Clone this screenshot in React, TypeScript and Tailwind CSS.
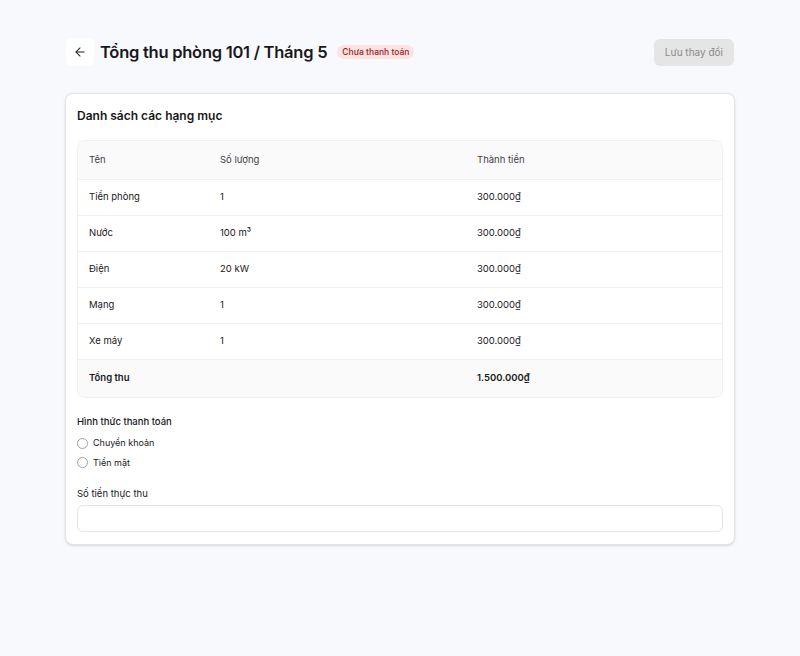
import { ArrowLeft } from "lucide-react";

const rows = [
  { name: "Tiền phòng", qty: "1", amount: "300.000₫" },
  { name: "Nước", qty: "100 m³", amount: "300.000₫" },
  { name: "Điện", qty: "20 kW", amount: "300.000₫" },
  { name: "Mạng", qty: "1", amount: "300.000₫" },
  { name: "Xe máy", qty: "1", amount: "300.000₫" },
];

export default function App() {
  return (
    <main
      className="min-h-screen bg-[#f8f9fc] px-[65px] pt-[38px] text-[#18181b]"
      style={{ fontFamily: "Inter, 'Noto Sans', sans-serif" }}
    >
      <header className="flex h-[28px] items-center justify-between">
        <div className="flex items-center">
          <button className="ml-[1px] flex h-[28px] w-[28px] items-center justify-center rounded-md bg-white">
            <ArrowLeft size={14} strokeWidth={1.75} />
          </button>
          <h1 className="ml-[6px] text-[16.5px] font-semibold tracking-[-0.25px]">Tổng thu phòng 101 / Tháng 5</h1>
          <span className="ml-[10px] rounded-full bg-[#fde2e2] px-[5px] py-[1px] text-[8.5px] font-medium text-[#991b1b]">
            Chưa thanh toán
          </span>
        </div>
        <button className="mr-[1px] h-[27px] rounded-md bg-[#e5e5e5] px-[11px] text-[10px] text-[#8a8a8a]">
          Lưu thay đổi
        </button>
      </header>

      <section className="mt-[27px] rounded-lg border border-[#e4e4e7] bg-white px-[11px] pb-[12px] pt-[13px] shadow-sm">
        <h2 className="text-[12px] font-semibold">Danh sách các hạng mục</h2>

        <div className="mt-[15px] overflow-hidden rounded-lg border border-[#f0f0f0] text-[9.5px]">
          <div className="flex h-[38px] items-center bg-[#fafafa] px-[11px] text-[#3f3f46]">
            <span className="w-[131px]">Tên</span>
            <span className="w-[257px]">Số lượng</span>
            <span>Thành tiền</span>
          </div>
          {rows.map((r) => (
            <div key={r.name} className="flex h-[36px] items-center border-t border-[#f0f0f0] px-[11px]">
              <span className="w-[131px]">{r.name}</span>
              <span className="w-[257px]">{r.qty}</span>
              <span>{r.amount}</span>
            </div>
          ))}
          <div className="flex h-[38px] items-center border-t border-[#f0f0f0] bg-[#fafafa] px-[11px] font-semibold">
            <span className="w-[388px]">Tổng thu</span>
            <span>1.500.000₫</span>
          </div>
        </div>

        <div className="mt-[17px] text-[9.5px]">
          <p className="font-medium">Hình thức thanh toán</p>
          <label className="mt-[7px] flex items-center gap-[5px]">
            <span className="h-[11px] w-[11px] rounded-full border border-[#a1a1aa]" />
            <span className="text-[9px]">Chuyển khoản</span>
          </label>
          <label className="mt-[6px] flex items-center gap-[5px]">
            <span className="h-[11px] w-[11px] rounded-full border border-[#a1a1aa]" />
            <span className="text-[9px]">Tiền mặt</span>
          </label>
        </div>

        <div className="mt-[18px] text-[9.5px]">
          <p>Số tiền thực thu</p>
          <input className="mt-[3px] h-[27px] w-full rounded-md border border-[#e4e4e7] bg-white px-2 outline-none" />
        </div>
      </section>
    </main>
  );
}
